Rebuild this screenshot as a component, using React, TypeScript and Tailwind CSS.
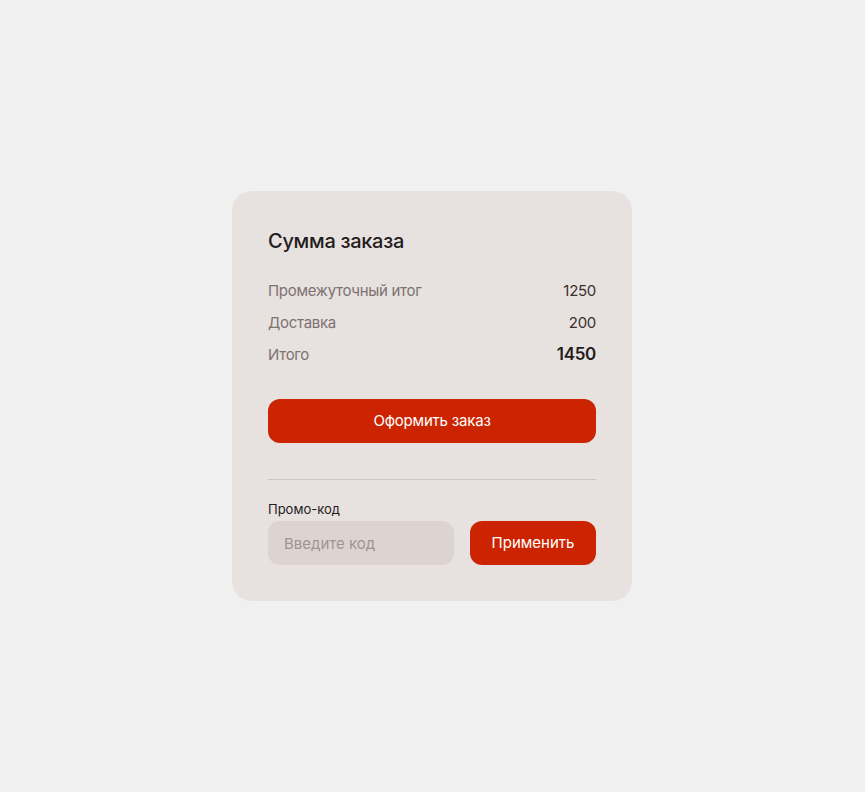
export default function App() {
  return (
    <div
      className="flex min-h-[792px] w-full items-center justify-center bg-[#f0f0f0] pr-px"
      style={{ fontFamily: "Inter, 'Noto Sans', sans-serif" }}
    >
      <div className="w-[400px] rounded-[20px] bg-[#e7e1e0] p-9">
        <h2 className="text-[20px] leading-7 font-medium text-[#241c1b] tracking-[-0.3px]">
          Сумма заказа
        </h2>

        <div className="mt-[24px] flex flex-col gap-2">
          <div className="flex h-6 items-center justify-between text-[15px] tracking-[-0.3px]">
            <span className="text-[#7d7270]">Промежуточный итог</span>
            <span className="text-[#3a302e]">1250</span>
          </div>
          <div className="flex h-6 items-center justify-between text-[15px] tracking-[-0.3px]">
            <span className="text-[#7d7270]">Доставка</span>
            <span className="text-[#3a302e]">200</span>
          </div>
          <div className="flex h-6 items-center justify-between text-[15px] tracking-[-0.3px]">
            <span className="text-[#7d7270]">Итого</span>
            <span className="text-[17px] font-semibold text-[#241c1b]">1450</span>
          </div>
        </div>

        <button className="mt-8 h-11 w-full rounded-xl bg-[#cc2400] text-[15px] tracking-[-0.2px] text-white">
          Оформить заказ
        </button>

        <div className="mt-9 h-px w-full bg-[#cbc4c2]" />

        <div className="mt-5 text-[13px] leading-[18px] text-[#241c1b]">Промо-код</div>
        <div className="mt-[3px] flex gap-4">
          <input
            placeholder="Введите код"
            className="h-11 w-[186px] rounded-xl bg-[#ddd4d1] px-4 text-[15px] text-[#241c1b] outline-none placeholder:text-[#a09593]"
          />
          <button className="h-11 flex-1 rounded-xl bg-[#cc2400] text-[15px] text-white">
            Применить
          </button>
        </div>
      </div>
    </div>
  );
}
